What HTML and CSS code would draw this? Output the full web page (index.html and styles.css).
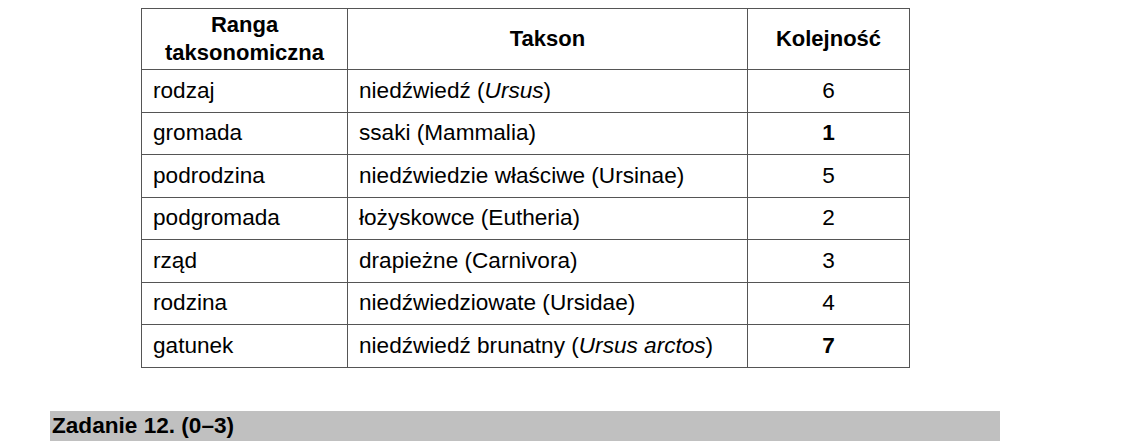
FILE: index.html
```html
<!DOCTYPE html>
<html lang="pl">
<head>
<meta charset="utf-8">
<link rel="stylesheet" href="styles.css">
</head>
<body>
<div class="page">
  <table class="tax">
    <thead>
      <tr>
        <th class="c1">Ranga<br>taksonomiczna</th>
        <th class="c2">Takson</th>
        <th class="c3">Kolejność</th>
      </tr>
    </thead>
    <tbody>
      <tr><td>rodzaj</td><td>niedźwiedź (<i>Ursus</i>)</td><td class="num">6</td></tr>
      <tr><td>gromada</td><td>ssaki (Mammalia)</td><td class="num"><b>1</b></td></tr>
      <tr><td>podrodzina</td><td>niedźwiedzie właściwe (Ursinae)</td><td class="num">5</td></tr>
      <tr><td>podgromada</td><td>łożyskowce (Eutheria)</td><td class="num">2</td></tr>
      <tr><td>rząd</td><td>drapieżne (Carnivora)</td><td class="num">3</td></tr>
      <tr><td>rodzina</td><td>niedźwiedziowate (Ursidae)</td><td class="num">4</td></tr>
      <tr><td>gatunek</td><td>niedźwiedź brunatny (<i>Ursus arctos</i>)</td><td class="num"><b>7</b></td></tr>
    </tbody>
  </table>
  <div class="task">Zadanie 12. (0–3)</div>
</div>
</body>
</html>
```

FILE: styles.css
```css
html, body {
  margin: 0;
  padding: 0;
  background: #ffffff;
}

body {
  font-family: "Liberation Sans", Arial, sans-serif;
  color: #000;
}

.page {
  padding-top: 8px;
  display: flex;
  flex-direction: column;
}

.tax {
  margin-left: 141px;
  border-collapse: collapse;
  font-size: 22.6px;
  table-layout: fixed;
  width: 765px;
}

.tax th,
.tax td {
  border: 1px solid #555;
  padding: 0 0 0 11px;
  text-align: left;
  vertical-align: middle;
}

.tax th {
  height: 60px;
  line-height: 28px;
  text-align: center;
  padding: 0;
  font-weight: bold;
  font-size: 22px;
}

.tax td {
  height: 41.5px;
  line-height: 26px;
  padding-bottom: 0;
}

.c1 { width: 205px; }
.c2 { width: 399px; }
.c3 { width: 161px; }

.tax td.num {
  text-align: center;
  padding-left: 0;
}

.task {
  margin-top: 43px;
  margin-left: 50px;
  width: 950px;
  height: 30px;
  background: #c0c0c0;
  font-weight: bold;
  font-size: 22.6px;
  line-height: 30px;
  padding-left: 2px;
  box-sizing: border-box;
}
```
